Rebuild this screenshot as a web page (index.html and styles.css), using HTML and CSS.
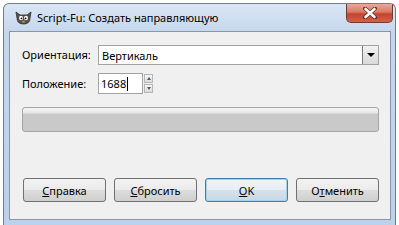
FILE: index.html
```html
<!DOCTYPE html>
<html lang="ru">
<head>
  <meta charset="UTF-8">
  <title>Script-Fu: Создать направляющую</title>
  <link rel="stylesheet" href="styles.css">
</head>
<body>
  <div class="window">
    <div class="titlebar">
      <svg class="app-icon" width="17" height="14" viewBox="0 0 17 14">
        <path d="M1 1 L5 4 L12 4 L16 1 L15 7 Q15 13 8.5 13 Q2 13 2 7 Z" fill="#55524c" stroke="#2e2c29" stroke-width="0.8"/>
        <ellipse cx="6" cy="7" rx="2" ry="2.2" fill="#fff"/>
        <ellipse cx="11" cy="7" rx="2" ry="2.2" fill="#fff"/>
        <circle cx="6.4" cy="7.3" r="0.9" fill="#000"/>
        <circle cx="10.6" cy="7.3" r="0.9" fill="#000"/>
        <ellipse cx="8.5" cy="10.8" rx="1.6" ry="1" fill="#b58a4a"/>
      </svg>
      <span class="title">Script-Fu: Создать направляющую</span>
      <div class="close-btn">
        <svg width="16" height="12" viewBox="0 0 16 12">
          <path d="M3 1.5 L13 10.5 M13 1.5 L3 10.5" fill="none" stroke="#6b2a20" stroke-width="4" stroke-linecap="round"/>
          <path d="M3.5 2 L12.5 10 M12.5 2 L3.5 10" fill="none" stroke="#fff" stroke-width="2.6" stroke-linecap="round"/>
        </svg>
      </div>
    </div>
    <div class="client">
      <div class="form">
        <label class="field-label">Ориентация:</label>
        <div class="combo">
          <span class="combo-text">Вертикаль</span>
          <span class="combo-arrow"><span class="tri"></span></span>
        </div>
        <label class="field-label">Положение:</label>
        <div class="spin-row">
          <div class="spin-entry">1688<span class="caret"></span></div>
          <div class="spin-btns">
            <span class="spin-btn"><span class="tri-up"></span></span>
            <span class="spin-btn"><span class="tri-down"></span></span>
          </div>
        </div>
      </div>
      <div class="progress"></div>
      <div class="buttons">
        <button class="btn"><u>С</u>правка</button>
        <button class="btn"><u>С</u>бросить</button>
        <button class="btn btn-default"><u>O</u>K</button>
        <button class="btn">О<u>т</u>менить</button>
      </div>
    </div>
  </div>
</body>
</html>
```

FILE: styles.css
```css
body {
  margin: 0;
  background: #ffffff;
  font-family: "Noto Sans", "Open Sans", sans-serif;
  font-size: 11px;
  color: #000;
}
.window {
  margin: 3px 0 0 3px;
  width: 393px;
  height: 222px;
  box-sizing: border-box;
  border: 1px solid #6f7d8c;
  border-bottom: none;
  border-radius: 6px 6px 0 0;
  background: linear-gradient(to bottom, #dae6f4 0, #c4d7ed 30px, #bcd2ea 100%);
  padding: 0 4px 5px 5px;
  display: flex;
  flex-direction: column;
}
.titlebar {
  height: 27px;
  display: flex;
  align-items: flex-start;
}
.app-icon {
  margin: 7px 0 0 6px;
}
.title {
  margin: 6px 0 0 5px;
  font-size: 11px;
  line-height: 16px;
}
.close-btn {
  margin-left: auto;
  margin-right: -2px;
  width: 45px;
  height: 18px;
  border: 1px solid #6b3d36;
  border-top: none;
  border-radius: 0 0 5px 5px;
  background: linear-gradient(to bottom, #e9a99b 0%, #d77a67 45%, #c6432b 55%, #d0624a 100%);
  display: flex;
  justify-content: center;
  align-items: center;
}
.client {
  flex: 1;
  border: 1px solid #8796a8;
  background: #f0f0f0;
  padding: 13px 11px 0 12px;
  display: flex;
  flex-direction: column;
}
.form {
  display: grid;
  grid-template-columns: 76px 1fr;
  row-gap: 8px;
  align-items: center;
}
.field-label {
  line-height: 16px;
}
.combo {
  height: 20px;
  box-sizing: border-box;
  border: 1px solid #a3a3a3;
  background: #fff;
  display: flex;
  align-items: center;
}
.combo-text {
  flex: 1;
  padding-left: 3px;
}
.combo-arrow {
  width: 16px;
  height: 18px;
  box-sizing: border-box;
  border-left: 1px solid #7a7a7a;
  background: linear-gradient(to bottom, #f2f2f2, #d9d9d9);
  display: flex;
  justify-content: center;
  align-items: center;
}
.tri {
  border-left: 4px solid transparent;
  border-right: 4px solid transparent;
  border-top: 4px solid #000;
}
.spin-row {
  display: flex;
  align-items: center;
  gap: 1px;
}
.spin-entry {
  width: 45px;
  height: 21px;
  box-sizing: border-box;
  border: 1px solid #a3a3a3;
  background: #fff;
  padding-left: 2px;
  line-height: 19px;
  display: flex;
  align-items: center;
}
.caret {
  display: inline-block;
  width: 1px;
  height: 14px;
  background: #000;
  margin-left: 1px;
}
.spin-btns {
  display: flex;
  flex-direction: column;
  gap: 1px;
}
.spin-btn {
  width: 9px;
  height: 9px;
  box-sizing: border-box;
  border: 1px solid #b5b5b5;
  background: linear-gradient(to bottom, #f6f6f6, #dcdcdc);
  display: flex;
  justify-content: center;
  align-items: center;
}
.tri-up {
  border-left: 2.5px solid transparent;
  border-right: 2.5px solid transparent;
  border-bottom: 3px solid #4a5a6a;
}
.tri-down {
  border-left: 2.5px solid transparent;
  border-right: 2.5px solid transparent;
  border-top: 3px solid #4a5a6a;
}
.progress {
  margin-top: 13px;
  height: 25px;
  box-sizing: border-box;
  border: 1px solid #a5a5a5;
  border-radius: 3px;
  background: linear-gradient(to bottom, #f5f5f5 0, #e6e6e6 5px, #c9c9c9 6px, #c9c9c9 100%);
}
.buttons {
  margin-top: 46px;
  display: flex;
  justify-content: space-between;
  padding-left: 1px;
}
.btn {
  width: 83px;
  height: 24px;
  border: 1px solid #707070;
  border-radius: 3px;
  background: linear-gradient(to bottom, #f2f2f2 0%, #ebebeb 50%, #dddddd 51%, #cfcfcf 100%);
  font-family: "Noto Sans", "Open Sans", sans-serif;
  font-size: 11px;
  color: #000;
  padding: 0;
}
.btn-default {
  border-color: #3c7fb1;
  background: linear-gradient(to bottom, #f0f6fa 0%, #e6eef4 50%, #d6e2ec 51%, #c8d8e6 100%);
  box-shadow: inset 0 0 0 1px #9fd3f0;
}
```
